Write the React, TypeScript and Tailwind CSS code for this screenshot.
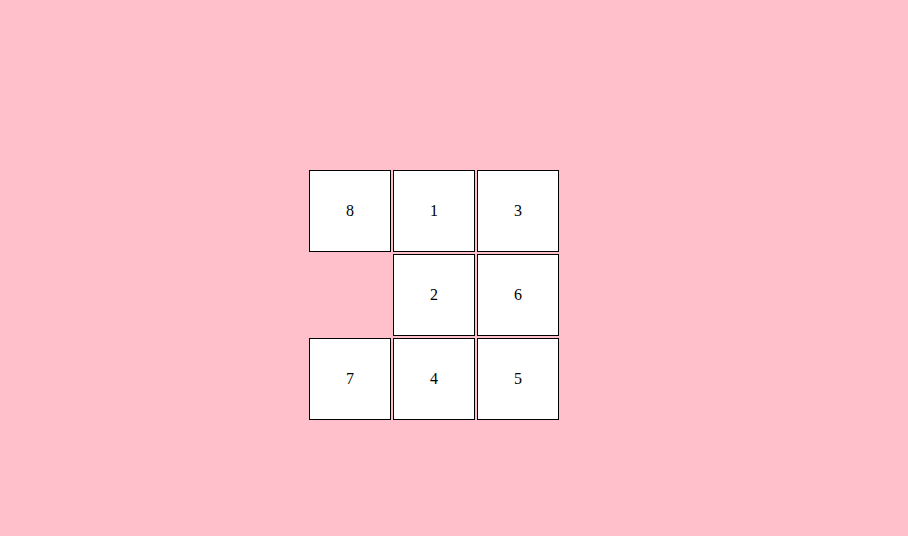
import React from "react";

const cells: (number | null)[] = [8, 1, 3, null, 2, 6, 7, 4, 5];

export default function App() {
  return (
    <div className="w-[908px] h-[536px] bg-[#ffc0cb] pl-[309px] pt-[170px]" style={{ fontFamily: '"Liberation Serif", serif' }}>
      <div className="grid grid-cols-[82px_82px_82px] grid-rows-[82px_82px_82px] gap-[2px] w-fit">
        {cells.map((c, i) =>
          c === null ? (
            <div key={i} />
          ) : (
            <div
              key={i}
              className="w-[82px] h-[82px] border border-black bg-white flex items-center justify-center text-[16px] text-black"
            >
              {c}
            </div>
          )
        )}
      </div>
    </div>
  );
}
